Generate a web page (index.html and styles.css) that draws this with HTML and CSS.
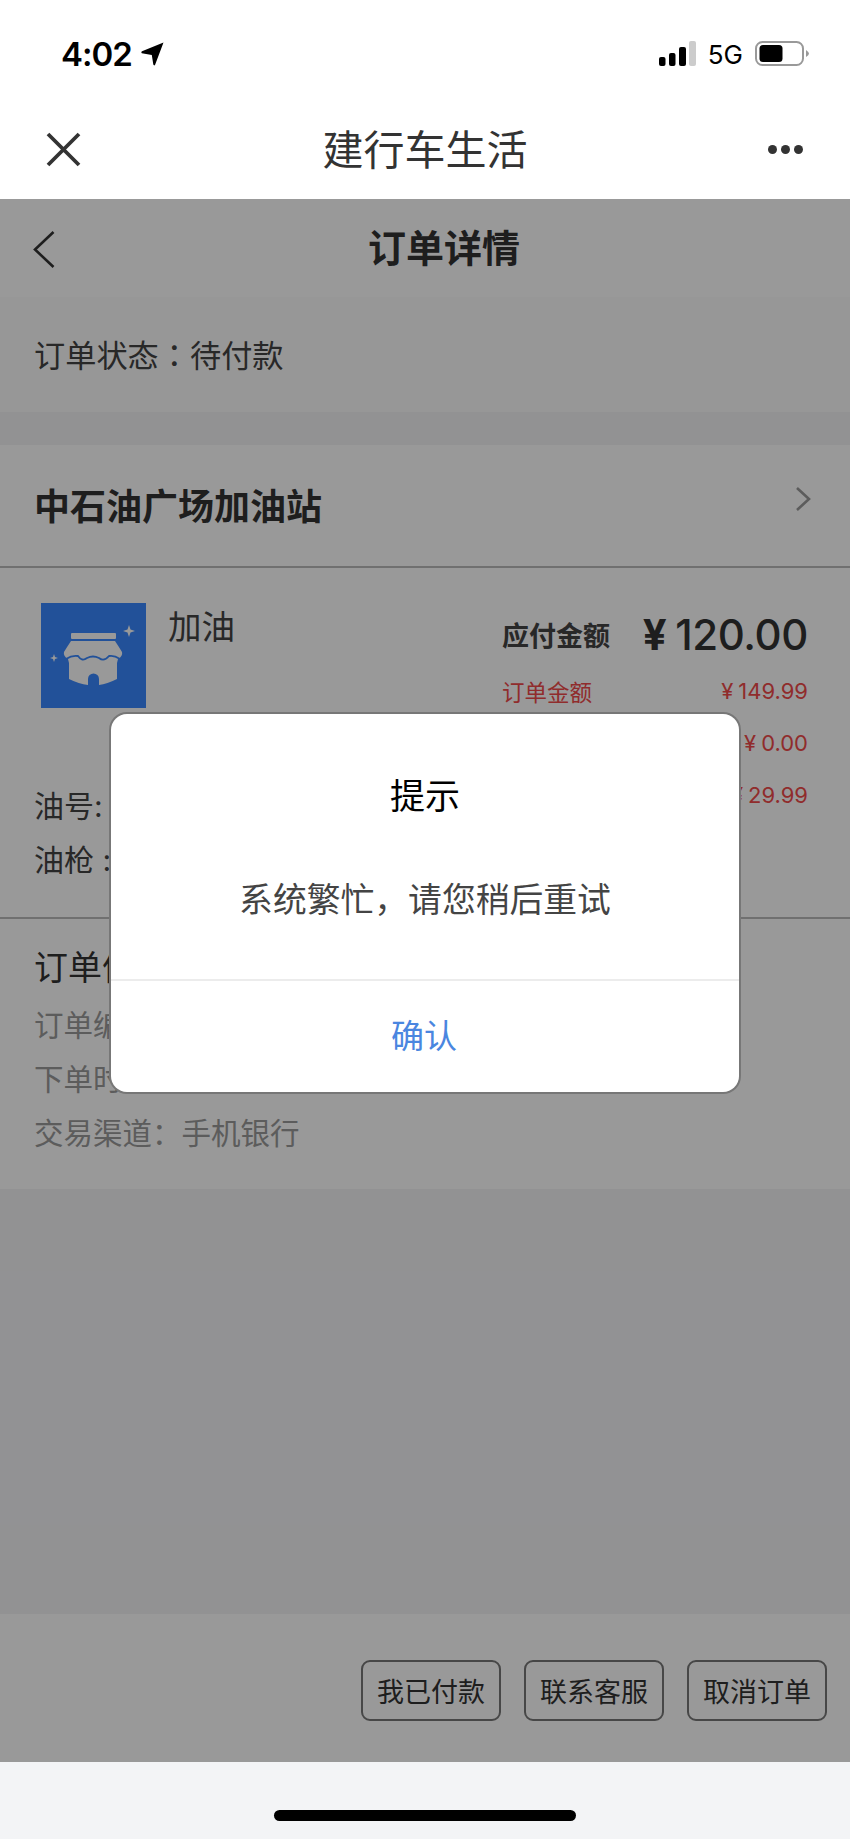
FILE: index.html
```html
<html>
  <head>
    <meta charset="utf-8">
    <link rel="stylesheet" href="styles.css">
  </head>

  <body>
    <div class="phone">
      <div class="status-bar">
        <div class="status-left">
          <span class="time">4:02</span>
          <svg class="location" width="23" height="24" viewBox="0 0 23 24"><path d="M22.5 0.5 L14 23 Q13 24 12.3 22.6 L10.8 13 L0.8 11.2 Q-0.2 10 1 9.2 Z" fill="#000"/></svg>
        </div>
        <div class="status-right">
          <svg width="37" height="25" viewBox="0 0 37 25">
            <rect x="0" y="16" width="6.5" height="9" rx="2" fill="#000"/>
            <rect x="10" y="12" width="6.5" height="13" rx="2" fill="#000"/>
            <rect x="20" y="6" width="7" height="19" rx="2" fill="#000"/>
            <rect x="30" y="0" width="7" height="25" rx="2" fill="#ccc"/>
          </svg>
          <span class="network">5G</span>
          <svg width="55" height="25" viewBox="0 0 55 25">
            <rect x="1" y="1" width="47" height="23" rx="6.5" fill="none" stroke="#999" stroke-width="2"/>
            <rect x="4.5" y="4" width="23" height="17" rx="3.5" fill="#000"/>
            <path d="M51 9 Q54 11 54 12.5 Q54 14 51 16 Z" fill="#999"/>
          </svg>
        </div>
      </div>

      <div class="nav-bar">
        <svg width="35" height="35" viewBox="0 0 35 35"><path d="M2 2 L33 33 M33 2 L2 33" stroke="#333" stroke-width="3.8" fill="none"/></svg>
        <div class="nav-title">建行车生活</div>
        <div class="more"><i></i><i></i><i></i></div>
      </div>

      <div class="webview">
        <div class="page-head">
          <svg class="back" width="22" height="37" viewBox="0 0 22 37"><path d="M20.5 1 L2 18.5 L20.5 36" stroke="#333" stroke-width="2.6" fill="none"/></svg>
          <h1>订单详情</h1>
        </div>

        <div class="order-status">订单状态<span class="colon">：</span>待付款</div>

        <div class="shop-row">
          <span>中石油广场加油站</span>
          <svg width="16" height="26" viewBox="0 0 16 26"><path d="M2 2 L14 13 L2 24" stroke="#999" stroke-width="2.6" fill="none"/></svg>
        </div>

        <div class="goods">
          <div class="goods-left">
            <div class="goods-top">
              <svg class="goods-img" width="105" height="105" viewBox="0 0 105 105">
                <rect width="105" height="105" fill="#3a88ff"/>
                <rect x="30" y="30" width="45" height="6" rx="1" fill="#fff"/>
                <path d="M30 38 L74 38 Q78 44 81 49 Q82 53 77 56 L76 60 L76 76 Q66 81 58 82 L58 76 A5.5 5.5 0 0 0 47 76 L47 82 Q38 81 28 76 L28 60 L27 56 Q22 53 23 49 Q26 44 30 38 Z" fill="#fff"/>
                <path d="M25 56 Q31 52 37 53 Q41 59 46 55 Q52 52 58 55 Q63 59 68 53 Q73 52 79 56" stroke="#3a88ff" stroke-width="1.8" fill="none"/>
                <path d="M88 22 L89.5 26.5 L94 28 L89.5 29.5 L88 34 L86.5 29.5 L82 28 L86.5 26.5 Z" fill="#fff"/>
                <path d="M13 51 L14 54 L17 55 L14 56 L13 59 L12 56 L9 55 L12 54 Z" fill="#fff"/>
              </svg>
              <div class="goods-name">加油</div>
            </div>
            <div class="fuel-line">油号:</div>
            <div class="fuel-line">油枪 :</div>
          </div>
          <div class="goods-right">
            <div class="price-main">
              <span class="price-label">应付金额</span>
              <span class="price-total"><em>¥</em>120.00</span>
            </div>
            <div class="price-line"><span class="price-name">订单金额</span><span><em>¥</em>149.99</span></div>
            <div class="price-line"><span class="price-name">优惠金额</span><span><em>¥</em>0.00</span></div>
            <div class="price-line"><span class="price-name">立减金额</span><span><em>¥</em>29.99</span></div>
          </div>
        </div>

        <div class="order-info">
          <div class="info-title">订单信息</div>
          <div class="info-line">订单编号：</div>
          <div class="info-line">下单时间：</div>
          <div class="info-line">交易渠道：手机银行</div>
        </div>

        <div class="spacer"></div>

        <div class="actions">
          <button>我已付款</button>
          <button>联系客服</button>
          <button>取消订单</button>
        </div>

        <div class="mask">
          <div class="dialog">
            <div class="dialog-title">提示</div>
            <div class="dialog-msg">系统繁忙，请您稍后重试</div>
            <div class="dialog-btn">确认</div>
          </div>
        </div>
      </div>

      <div class="home-area"><div class="home-bar"></div></div>
    </div>
  </body>
</html>
```

FILE: styles.css
```css
* {
  box-sizing: border-box;
  margin: 0;
  padding: 0;
}

html,
body {
  height: 100%;
  margin: 0;
}

body {
  background-color: #fff;
  font-family: Inter, "Noto Sans CJK SC", sans-serif;
  overflow: hidden;
}

.phone {
  display: flex;
  flex-direction: column;
  height: 1839px;
  width: 850px;
}

/* status bar */
.status-bar {
  align-items: center;
  display: flex;
  height: 107px;
  justify-content: space-between;
  padding: 0 40px 0 61px;
}

.status-left,
.status-right {
  align-items: center;
  display: flex;
}

.time {
  color: #000;
  font-size: 33px;
  font-weight: 600;
  letter-spacing: -1px;
}

.location {
  margin-left: 9px;
}

.network {
  color: #000;
  font-size: 26px;
  margin: 2px 12px 0;
}

/* wechat nav */
.nav-bar {
  align-items: center;
  display: flex;
  height: 92px;
  justify-content: space-between;
  padding: 0 47px 8px 46px;
  position: relative;
}

.nav-title {
  color: #333;
  font-size: 41px;
  left: 0;
  line-height: 50px;
  position: absolute;
  right: 0;
  text-align: center;
  top: 18px;
}

.more {
  display: flex;
  gap: 4px;
}

.more i {
  background-color: #333;
  border-radius: 50%;
  display: block;
  height: 9px;
  width: 9px;
}

/* page under the mask */
.webview {
  background-color: #f3f4f6;
  display: flex;
  flex: 1;
  flex-direction: column;
  position: relative;
}

.page-head {
  align-items: center;
  background-color: #fff;
  display: flex;
  height: 98px;
  justify-content: center;
  padding-left: 38px;
  position: relative;
}

.page-head h1 {
  color: #333;
  font-size: 38px;
  font-weight: 700;
  margin-top: -6px;
}

.back {
  left: 33px;
  position: absolute;
  top: 32px;
}

.order-status {
  background-color: #fcfcfc;
  color: #444;
  font-size: 31.2px;
  height: 115px;
  line-height: 113px;
  margin-bottom: 33px;
  padding-left: 34px;
}

.colon {
  font-family: "Noto Sans CJK TC", sans-serif;
}

.shop-row {
  align-items: center;
  background-color: #fff;
  border-bottom: 2px solid #bbb;
  color: #333;
  display: flex;
  font-size: 36px;
  font-weight: 700;
  height: 123px;
  justify-content: space-between;
  padding: 0 39px 0 34px;
}

.shop-row span {
  margin-top: -4px;
}

.shop-row svg {
  margin-top: -14px;
}

.goods {
  background-color: #fff;
  border-bottom: 2px solid #bbb;
  display: flex;
  height: 351px;
  justify-content: space-between;
  padding: 35px 42px 0 34px;
}

.goods-top {
  display: flex;
  margin-bottom: 71px;
}

.goods-img {
  display: block;
  margin-left: 7px;
}

.goods-name {
  color: #444;
  font-size: 33.5px;
  line-height: 48px;
  margin-left: 22px;
}

.fuel-line {
  color: #444;
  font-size: 30px;
  height: 54px;
  line-height: 54px;
}

.goods-right {
  width: 306px;
}

.price-main {
  align-items: center;
  display: flex;
  height: 62px;
  justify-content: space-between;
}

.price-label {
  color: #444;
  font-size: 27px;
  font-weight: 700;
}

.price-total {
  color: #333;
  font-size: 42px;
  font-weight: 500;
  letter-spacing: -0.4px;
}

.price-total em {
  font-style: normal;
  font-weight: 700;
  margin-right: 9px;
}

.price-line {
  align-items: center;
  color: #f04a4a;
  display: flex;
  font-size: 22px;
  height: 52px;
  justify-content: space-between;
}

.price-name {
  font-size: 22.5px;
}

.price-line em {
  font-style: normal;
  margin-right: 5px;
}

.order-info {
  background-color: #fff;
  height: 270px;
  padding: 24px 34px 0;
}

.info-title {
  color: #333;
  font-size: 34px;
  height: 50px;
  line-height: 50px;
  margin-bottom: 5px;
}

.info-line {
  color: #999;
  font-size: 29.5px;
  height: 54px;
  line-height: 54px;
}

.spacer {
  flex: 1;
}

.actions {
  align-items: flex-start;
  background-color: #fff;
  display: flex;
  gap: 23px;
  height: 148px;
  justify-content: flex-end;
  padding: 46px 23px 0 0;
}

.actions button {
  background: none;
  border: 2px solid #777;
  border-radius: 9px;
  color: #333;
  font-family: inherit;
  font-size: 27px;
  height: 61px;
  width: 140px;
}

/* dialog */
.mask {
  align-items: flex-start;
  background-color: rgba(0, 0, 0, 0.4);
  bottom: 0;
  display: flex;
  justify-content: center;
  left: 0;
  padding-top: 515px;
  position: absolute;
  right: 0;
  top: 0;
}

.dialog {
  background-color: #fff;
  border-radius: 16px;
  box-shadow: 0 0 0 2px #777;
  height: 378px;
  width: 628px;
}

.dialog-title {
  color: #000;
  font-size: 35px;
  line-height: 50px;
  padding-top: 57px;
  text-align: center;
}

.dialog-msg {
  color: #444;
  font-size: 33.8px;
  height: 158px;
  line-height: 50px;
  padding-top: 54px;
  text-align: center;
}

.dialog-btn {
  border-top: 2px solid #ececec;
  color: #4a86e0;
  font-size: 33px;
  height: 113px;
  line-height: 110px;
  padding-right: 2px;
  text-align: center;
}

/* home indicator */
.home-area {
  background-color: #f3f4f6;
  height: 77px;
  padding-top: 48px;
}

.home-bar {
  background-color: #000;
  border-radius: 6px;
  height: 11px;
  margin: 0 auto;
  width: 302px;
}
```
